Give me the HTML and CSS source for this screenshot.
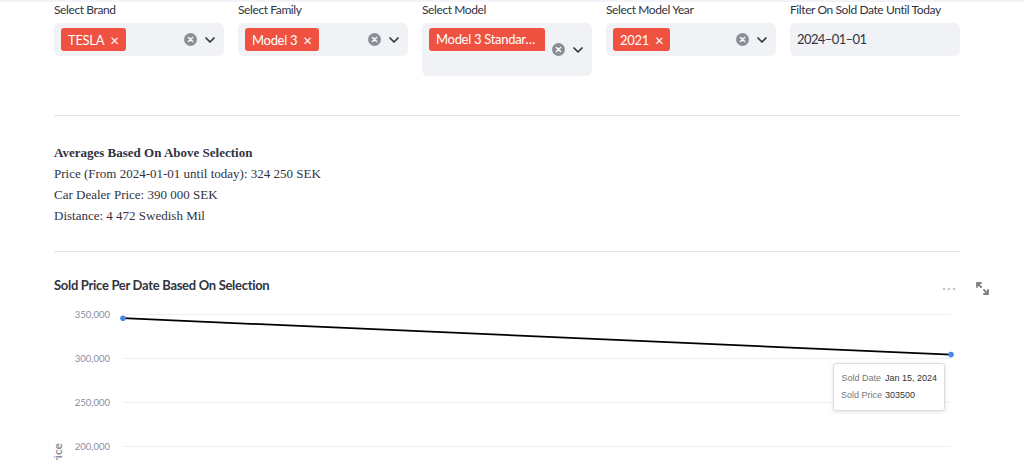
FILE: index.html
```html
<!DOCTYPE html>
<html lang="en">
<head>
    <meta charset="UTF-8">
    <meta name="viewport" content="width=device-width, initial-scale=1.0">
    <title>Car Prices</title>
    <link rel="stylesheet" href="styles.css">
</head>
<body>
    <div class="topbar"></div>
    <div class="page">
        <div class="filters">
            <div class="field">
                <div class="label">Select Brand</div>
                <div class="select">
                    <div class="tags"><span class="tag">TESLA <span class="tag-x">&times;</span></span></div>
                    <span class="clear"><svg width="13" height="13" viewBox="0 0 13 13"><circle cx="6.5" cy="6.5" r="6.5" fill="#8b8d97"/><path d="M4.4 4.4l4.2 4.2M8.6 4.4l-4.2 4.2" stroke="#fff" stroke-width="1.4" stroke-linecap="round"/></svg></span>
                    <span class="chev"><svg width="10" height="6" viewBox="0 0 10 6"><path d="M1 1l4 4 4-4" fill="none" stroke="#31333f" stroke-width="1.7" stroke-linecap="round" stroke-linejoin="round"/></svg></span>
                </div>
            </div>
            <div class="field">
                <div class="label">Select Family</div>
                <div class="select">
                    <div class="tags"><span class="tag">Model 3 <span class="tag-x">&times;</span></span></div>
                    <span class="clear"><svg width="13" height="13" viewBox="0 0 13 13"><circle cx="6.5" cy="6.5" r="6.5" fill="#8b8d97"/><path d="M4.4 4.4l4.2 4.2M8.6 4.4l-4.2 4.2" stroke="#fff" stroke-width="1.4" stroke-linecap="round"/></svg></span>
                    <span class="chev"><svg width="10" height="6" viewBox="0 0 10 6"><path d="M1 1l4 4 4-4" fill="none" stroke="#31333f" stroke-width="1.7" stroke-linecap="round" stroke-linejoin="round"/></svg></span>
                </div>
            </div>
            <div class="field">
                <div class="label">Select Model</div>
                <div class="select">
                    <div class="tags">
                        <span class="tag tag-long">Model 3 Standard Range Plus</span>
                        <span class="input-line"></span>
                    </div>
                    <span class="clear"><svg width="13" height="13" viewBox="0 0 13 13"><circle cx="6.5" cy="6.5" r="6.5" fill="#8b8d97"/><path d="M4.4 4.4l4.2 4.2M8.6 4.4l-4.2 4.2" stroke="#fff" stroke-width="1.4" stroke-linecap="round"/></svg></span>
                    <span class="chev"><svg width="10" height="6" viewBox="0 0 10 6"><path d="M1 1l4 4 4-4" fill="none" stroke="#31333f" stroke-width="1.7" stroke-linecap="round" stroke-linejoin="round"/></svg></span>
                </div>
            </div>
            <div class="field">
                <div class="label">Select Model Year</div>
                <div class="select">
                    <div class="tags"><span class="tag">2021 <span class="tag-x">&times;</span></span></div>
                    <span class="clear"><svg width="13" height="13" viewBox="0 0 13 13"><circle cx="6.5" cy="6.5" r="6.5" fill="#8b8d97"/><path d="M4.4 4.4l4.2 4.2M8.6 4.4l-4.2 4.2" stroke="#fff" stroke-width="1.4" stroke-linecap="round"/></svg></span>
                    <span class="chev"><svg width="10" height="6" viewBox="0 0 10 6"><path d="M1 1l4 4 4-4" fill="none" stroke="#31333f" stroke-width="1.7" stroke-linecap="round" stroke-linejoin="round"/></svg></span>
                </div>
            </div>
            <div class="field">
                <div class="label">Filter On Sold Date Until Today</div>
                <div class="date-input">2024&ndash;01&ndash;01</div>
            </div>
        </div>

        <hr class="divider">

        <div class="averages">
            <p><b>Averages Based On Above Selection</b></p>
            <p>Price (From 2024-01-01 until today): 324 250 SEK</p>
            <p>Car Dealer Price: 390 000 SEK</p>
            <p>Distance: 4 472 Swedish Mil</p>
        </div>

        <hr class="divider">

        <div class="chart">
            <div class="chart-title">Sold Price Per Date Based On Selection</div>
            <div class="toolbar">
                <svg width="14" height="4" viewBox="0 0 14 4"><circle cx="2" cy="2" r="1.3" fill="#c4c6cc"/><circle cx="7" cy="2" r="1.3" fill="#c4c6cc"/><circle cx="12" cy="2" r="1.3" fill="#c4c6cc"/></svg>
                <svg width="13" height="13" viewBox="0 0 13 13"><path d="M1 1h4M1 1v4M1 1l4 4M12 12h-4M12 12v-4M12 12l-4-4" fill="none" stroke="#7d7f87" stroke-width="1.8" stroke-linecap="round"/></svg>
            </div>
            <svg class="plot" width="906" height="170" viewBox="0 0 906 170">
                <g stroke="#eff0f4" stroke-width="1">
                    <line x1="69" y1="14.5" x2="897" y2="14.5"/>
                    <line x1="69" y1="58.5" x2="897" y2="58.5"/>
                    <line x1="69" y1="102.5" x2="897" y2="102.5"/>
                    <line x1="69" y1="146.5" x2="897" y2="146.5"/>
                </g>
                <g class="tick" text-anchor="end">
                    <text x="56" y="17.5">350,000</text>
                    <text x="56" y="61.5">300,000</text>
                    <text x="56" y="105.5">250,000</text>
                    <text x="56" y="149.5">200,000</text>
                </g>
                <text class="axis-title" transform="translate(8,143) rotate(-90)" text-anchor="end">Sold Price</text>
                <line x1="69" y1="18.2" x2="897" y2="54.6" stroke="#000" stroke-width="1.8"/>
                <circle cx="69" cy="18.2" r="2.8" fill="#4a86e0"/>
                <circle cx="897" cy="54.6" r="2.8" fill="#4a86e0"/>
            </svg>
            <div class="tooltip">
                <div class="tt-row"><span class="tt-key">Sold Date</span><span>Jan 15, 2024</span></div>
                <div class="tt-row"><span class="tt-key">Sold Price</span><span>303500</span></div>
            </div>
        </div>
    </div>
</body>
</html>
```

FILE: styles.css
```css
body {
    margin: 0;
    font-family: Lato, "Noto Sans", sans-serif;
    color: #31333f;
    background-color: #fff;
    overflow: hidden;
}
.topbar {
    height: 2px;
    background-color: #f3f4f7;
}
.page {
    width: 906px;
    padding-left: 54px;
}
.filters {
    display: grid;
    grid-template-columns: repeat(5, 170px);
    column-gap: 14px;
    align-items: start;
}
.label {
    font-size: 12px;
    line-height: 15px;
    letter-spacing: -0.4px;
    margin-bottom: 6px;
}
.select {
    display: flex;
    align-items: center;
    background-color: #f0f2f6;
    border-radius: 6px;
    padding: 5px 9px 5px 7px;
}
.tags {
    flex: 1;
    display: flex;
    flex-wrap: wrap;
    align-self: flex-start;
    min-width: 0;
}
.tag {
    display: inline-flex;
    align-items: center;
    height: 23px;
    padding: 0 7px;
    border-radius: 3px;
    background-color: #ef5241;
    color: #fff;
    font-size: 13px;
    letter-spacing: -0.3px;
    white-space: nowrap;
}
.tag-x {
    margin-left: 6px;
    font-size: 15px;
}
.tag-long {
    max-width: 102px;
    overflow: hidden;
    text-overflow: ellipsis;
    display: block;
    line-height: 22px;
    padding-right: 7px;
    border-radius: 3px 3px 0 3px;
}
.input-line {
    display: block;
    width: 100%;
    height: 20px;
}
.clear {
    display: flex;
    margin-left: 6px;
}
.chev {
    display: flex;
    margin-left: 8px;
}
.date-input {
    background-color: #f0f2f6;
    border-radius: 6px;
    height: 33px;
    line-height: 33px;
    padding-left: 7px;
    font-size: 13px;
    letter-spacing: -0.6px;
}
.divider {
    border: none;
    border-top: 1px solid #e4e5e9;
    margin: 39px 0 0 0;
}
.averages {
    font-family: "Liberation Serif", serif;
    font-size: 13px;
    color: #31333f;
    padding: 26px 0 25px 0;
}
.averages p {
    margin: 0;
    line-height: 21px;
}
.averages + .divider {
    margin-top: 0;
}
.chart {
    position: relative;
    padding-top: 24px;
}
.chart-title {
    font-size: 13px;
    font-weight: bold;
    letter-spacing: -0.3px;
    line-height: 18px;
}
.toolbar {
    position: absolute;
    top: 30px;
    right: -29px;
    display: flex;
    align-items: center;
    gap: 20px;
}
.plot {
    display: block;
    margin-top: 6px;
}
.tick {
    font-family: Lato, sans-serif;
    font-size: 9.5px;
    fill: #8a8ea0;
}
.axis-title {
    font-family: Lato, sans-serif;
    font-size: 12px;
    font-weight: bold;
    fill: #8a8ea0;
}
.tooltip {
    position: absolute;
    left: 779px;
    top: 111px;
    padding: 6px 7px;
    background-color: #fff;
    border: 1px solid #dcdde2;
    border-radius: 3px;
    box-shadow: 0 1px 4px rgba(0,0,0,0.12);
    font-family: "Liberation Sans", Arial, sans-serif;
    font-size: 9px;
    color: #333;
    white-space: nowrap;
}
.tt-row {
    display: flex;
    gap: 4px;
    line-height: 17px;
}
.tt-key {
    width: 40px;
    text-align: right;
    color: #777;
}
```
